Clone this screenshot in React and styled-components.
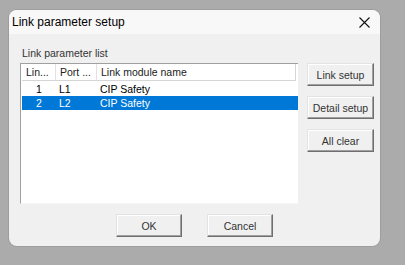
import React from "react";
import styled, { createGlobalStyle } from "styled-components";

const GlobalStyle = createGlobalStyle`
  body {
    margin: 0;
    background: #ababab;
    font-family: "Liberation Sans", Arial, sans-serif;
  }
`

const Screen = styled.div`
  width: 405px;
  height: 265px;
  padding: 10px 0 0 9px;
  box-sizing: border-box;
`

const Dialog = styled.div`
  width: 371px;
  height: 236px;
  background: #f0f0f0;
  border-radius: 8px;
  overflow: hidden;
  display: flex;
  flex-direction: column;
  box-shadow: 0 0 0 1px rgba(0, 0, 0, 0.08);
`

const TitleBar = styled.div`
  height: 24px;
  background: #f8f8f8;
  display: flex;
  align-items: center;
  justify-content: space-between;
  padding: 0 10px 0 3px;
  font-size: 12px;
  color: #000;
`

const Body = styled.div`
  flex: 1;
  display: flex;
  flex-direction: column;
  padding: 13px 6px 9px 11px;
`

const GroupLabel = styled.div`
  font-size: 10.5px;
  color: #333;
  height: 13px;
  line-height: 13px;
  padding-left: 2px;
  margin-bottom: 3px;
`

const Main = styled.div`
  display: flex;
  gap: 9px;
`

const ListBox = styled.div`
  width: 278px;
  height: 141px;
  flex: none;
  box-sizing: border-box;
  background: #fff;
  border-left: 1px solid #a0a0a0;
  border-top: 1px solid #a0a0a0;
  border-bottom: 1px solid #f5f5f5;
  font-size: 10.5px;
`

const Header = styled.div`
  display: flex;
  height: 16px;
  border-bottom: 1px solid #d5d5d5;
  border-right: 1px solid #d5d5d5;
  margin-right: 2px;
  margin-left: 1px;
  background: #fff;
`

const HeaderCell = styled.div`
  width: ${(p) => p.$w};
  flex: ${(p) => (p.$grow ? 1 : "none")};
  box-sizing: border-box;
  padding-left: 4px;
  line-height: 16px;
  border-right: ${(p) => (p.$grow ? "none" : "1px solid #e2e2e2")};
  color: #222;
  white-space: nowrap;
`

const Row = styled.div`
  display: flex;
  height: 14px;
  line-height: 14px;
  margin: ${(p) => (p.$first ? "1px" : "0")} 0 0 1px;
  background: ${(p) => (p.$selected ? "#0078d7" : "transparent")};
  color: ${(p) => (p.$selected ? "#fff" : "#000")};
`

const Cell = styled.div`
  width: ${(p) => p.$w};
  flex: ${(p) => (p.$grow ? 1 : "none")};
  box-sizing: border-box;
  text-align: ${(p) => p.$align || "left"};
  padding-left: ${(p) => p.$pad || "0"};
  white-space: nowrap;
`

const SideButtons = styled.div`
  display: flex;
  flex-direction: column;
  gap: 10px;
`

const Button = styled.button`
  width: ${(p) => p.$w || "67px"};
  height: 23px;
  box-sizing: border-box;
  padding: 0;
  background: #f0f0f0;
  border: 1px solid;
  border-color: #e3e3e3 #6f6f6f #6f6f6f #e3e3e3;
  box-shadow: inset -1px -1px 0 #a0a0a0, inset 1px 1px 0 #fff;
  font-family: "Liberation Sans", Arial, sans-serif;
  font-size: 10.5px;
  color: #333;
`

const Footer = styled.div`
  display: flex;
  justify-content: center;
  gap: 25px;
  margin-top: 10px;
  padding-right: 5px;
`

const CloseIcon = () => (
  <svg width="11" height="11" viewBox="0 0 11 11">
    <path d="M0.5 0.5 L10.5 10.5 M10.5 0.5 L0.5 10.5" stroke="#111" strokeWidth="1.1" />
  </svg>
)

const rows = [
  { no: "1", port: "L1", name: "CIP Safety" },
  { no: "2", port: "L2", name: "CIP Safety", selected: true },
]

const App = () => {
  return (
    <Screen>
      <GlobalStyle />
      <Dialog>
        <TitleBar>
          <span>Link parameter setup</span>
          <CloseIcon />
        </TitleBar>
        <Body>
          <GroupLabel>Link parameter list</GroupLabel>
          <Main>
            <ListBox>
              <Header>
                <HeaderCell $w="34px">Lin...</HeaderCell>
                <HeaderCell $w="41px">Port ...</HeaderCell>
                <HeaderCell $grow>Link module name</HeaderCell>
              </Header>
              {rows.map((r, i) => (
                <Row key={r.no} $selected={r.selected} $first={i === 0}>
                  <Cell $w="34px" $align="center">{r.no}</Cell>
                  <Cell $w="41px" $pad="3px">{r.port}</Cell>
                  <Cell $grow $pad="3px">{r.name}</Cell>
                </Row>
              ))}
            </ListBox>
            <SideButtons>
              <Button>Link setup</Button>
              <Button>Detail setup</Button>
              <Button>All clear</Button>
            </SideButtons>
          </Main>
          <Footer>
            <Button $w="66px">OK</Button>
            <Button $w="66px">Cancel</Button>
          </Footer>
        </Body>
      </Dialog>
    </Screen>
  );
}

export default App;
